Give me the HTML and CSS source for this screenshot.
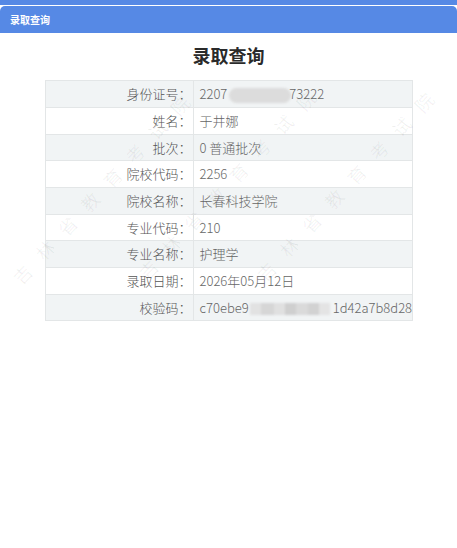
FILE: index.html
```html
<!DOCTYPE html>
<html lang="zh-CN">
<head>
    <meta charset="UTF-8">
    <meta name="viewport" content="width=device-width, initial-scale=1.0">
    <title>录取查询</title>
    <link rel="stylesheet" href="styles.css">
</head>
<body>
    <div class="topbar"></div>
    <div class="header">录取查询</div>

    <div class="content">
        <h1 class="title">录取查询</h1>

        <!-- 查询结果 -->
        <table class="result">
            <colgroup>
                <col class="col-label">
                <col class="col-value">
            </colgroup>
            <tr>
                <td class="label">身份证号：</td>
                <td class="value">2207<span class="mask mask-id"></span>73222</td>
            </tr>
            <tr>
                <td class="label">姓名：</td>
                <td class="value">于井娜</td>
            </tr>
            <tr>
                <td class="label">批次：</td>
                <td class="value">0 普通批次</td>
            </tr>
            <tr>
                <td class="label">院校代码：</td>
                <td class="value">2256</td>
            </tr>
            <tr>
                <td class="label">院校名称：</td>
                <td class="value">长春科技学院</td>
            </tr>
            <tr>
                <td class="label">专业代码：</td>
                <td class="value">210</td>
            </tr>
            <tr>
                <td class="label">专业名称：</td>
                <td class="value">护理学</td>
            </tr>
            <tr>
                <td class="label">录取日期：</td>
                <td class="value">2026年05月12日</td>
            </tr>
            <tr>
                <td class="label">校验码：</td>
                <td class="value">c70ebe9<span class="mask mask-code"></span>1d42a7b8d28</td>
            </tr>
        </table>

        <!-- 水印 -->
        <div class="watermark">
            <span class="wm wm-a">吉林省教育考试院</span>
            <span class="wm wm-b">吉林省教育考试院</span>
            <span class="wm wm-c">吉林省教育考试院</span>
        </div>
    </div>
</body>
</html>
```

FILE: styles.css
```css
body {
    margin: 0;
    background-color: #fff;
    font-family: "Noto Sans CJK SC", "Noto Sans", sans-serif;
    color: #555;
}

.topbar {
    height: 5px;
    background-color: #5689e5;
}

.header {
    margin-top: 1px;
    height: 27px;
    line-height: 27px;
    padding-left: 10px;
    background-color: #5689e5;
    border-radius: 5px 5px 0 0;
    color: #fff;
    font-size: 10px;
    font-weight: bold;
}

.content {
    position: relative;
}

.title {
    margin: 9px 0 12px;
    font-size: 18px;
    line-height: 26px;
    font-weight: bold;
    text-align: center;
    color: #2a2a2a;
}

.result {
    width: 368px;
    margin: 0 auto;
    border-collapse: collapse;
    table-layout: fixed;
    font-size: 13px;
    font-weight: 300;
}

.col-label {
    width: 148px;
}

.result td {
    height: 17.67px;
    line-height: 17.67px;
    padding: 4px 6px;
    border: 1px solid #e3e6e7;
    white-space: nowrap;
}

.result tr:nth-child(odd) td {
    background-color: #f1f4f5;
}

.label {
    padding-right: 1px !important;
    text-align: right;
    color: #555;
}

.value {
    color: #666;
}

.mask {
    display: inline-block;
    vertical-align: middle;
    filter: blur(1.2px);
}

.mask-id {
    width: 62px;
    height: 15px;
    margin: 0 -2px 0 2px;
    border-radius: 8px;
    background-color: #dcdcdc;
}

.mask-code {
    width: 80px;
    height: 12px;
    margin: 0 3px 0 1px;
    background: linear-gradient(90deg, #e2e2e2 0 14%, #d6d6d6 14% 30%, #e0e0e0 30% 44%, #cfcfcf 44% 58%, #dadada 58% 72%, #d2d2d2 72% 86%, #e4e4e4 86% 100%);
}

.watermark {
    position: absolute;
    top: 0;
    left: 0;
    right: 0;
    bottom: 0;
    pointer-events: none;
}

.wm {
    position: absolute;
    white-space: nowrap;
    font-size: 18px;
    letter-spacing: 15px;
    color: rgba(0, 0, 0, 0.06);
    transform: translate(-50%, -50%) rotate(-47deg);
}

.wm-a {
    left: 106px;
    top: 142px;
}

.wm-c {
    left: 232px;
    top: 137px;
}

.wm-b {
    left: 350px;
    top: 139px;
}
```
